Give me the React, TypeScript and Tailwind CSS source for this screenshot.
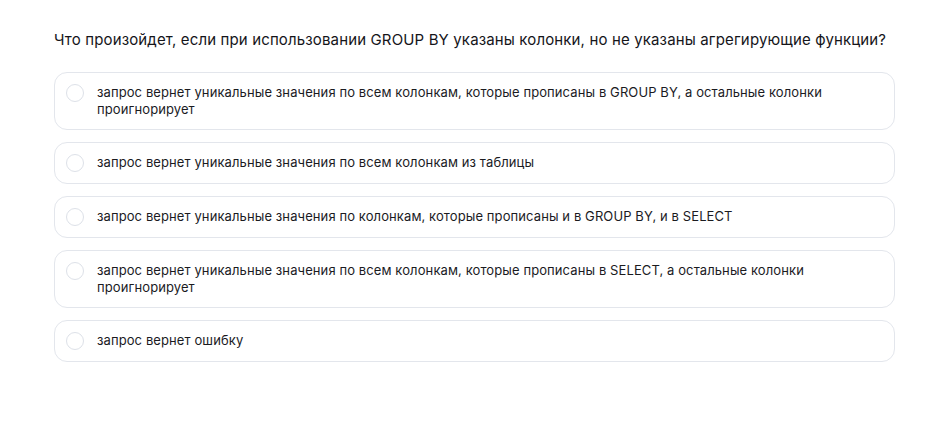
import React, {useState} from 'react'

const options = [
  'запрос вернет уникальные значения по всем колонкам, которые прописаны в GROUP BY, а остальные колонки проигнорирует',
  'запрос вернет уникальные значения по всем колонкам из таблицы',
  'запрос вернет уникальные значения по колонкам, которые прописаны и в GROUP BY, и в SELECT',
  'запрос вернет уникальные значения по всем колонкам, которые прописаны в SELECT, а остальные колонки проигнорирует',
  'запрос вернет ошибку',
]

export default function App() {
  const [selected, setSelected] = useState<number | null>(null)

  return (
    <div className="min-h-[426px] bg-white font-['Inter',sans-serif] text-[#1b1b1f]">
      <div className="pl-[54px] pt-[29px] w-[895px]">
        <p className="text-[15px] leading-[22px] tracking-[0.14px] mb-[21px] text-[#15151a]">
          Что произойдет, если при использовании GROUP BY указаны колонки, но не указаны агрегирующие функции?
        </p>

        <div className="flex flex-col gap-3">
          {options.map((o, i) => (
            <label
              key={i}
              onClick={() => setSelected(i)}
              className="flex items-start gap-[13px] rounded-[13px] border border-[#e3e6ec] pl-[11px] pr-6 py-[11px] cursor-pointer"
            >
              <span className="shrink-0 w-[18px] h-[18px] rounded-full border border-[#dde1e8] flex items-center justify-center">
                {selected === i && <span className="w-2 h-2 rounded-full bg-[#1b1b1f]"/>}
              </span>
              <span className="text-[13px] leading-[17px] tracking-[0.1px]">{o}</span>
            </label>
          ))}
        </div>
      </div>
    </div>
  )
}
